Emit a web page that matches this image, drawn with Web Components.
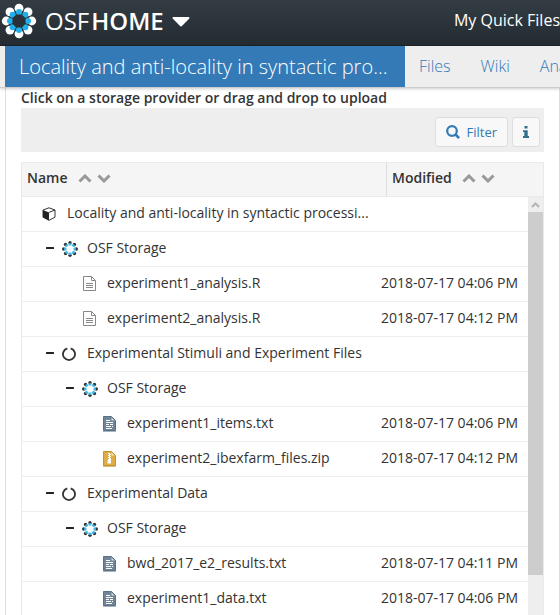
<!DOCTYPE html>
<html lang="en">
<head>
<meta charset="utf-8">
<title>OSF | Files</title>
<style>
  body { margin: 0; height: 100vh; overflow: hidden; background: #fff; color: #333; font: 14px/20px "Open Sans", "Noto Sans", sans-serif; }
</style>
</head>
<body>
<osf-page>
  <osf-navbar slot="top"><a href="#quickfiles">My Quick Files</a></osf-navbar>
  <project-nav slot="nav">
    <a slot="title" href="#project">Locality and anti-locality in syntactic pro...</a>
    <a href="#files">Files</a>
    <a href="#wiki">Wiki</a>
    <a href="#analytics">Analytics</a>
  </project-nav>
  <files-toolbar>Click on a storage provider or drag and drop to upload</files-toolbar>
  <files-grid></files-grid>
</osf-page>

<script>
const ring = (n, c, d, r, fill) => Array.from({ length: n }, (_, i) => {
  const a = i * 2 * Math.PI / n;
  return `<circle cx="${(c + d * Math.cos(a)).toFixed(2)}" cy="${(c + d * Math.sin(a)).toFixed(2)}" r="${r}" fill="${fill}"/>`;
}).join('');

const sheet = (fill, stroke, body) => `<path d="M1.5 1.5h8l4 4v10h-12z" fill="${fill}" stroke="${stroke}"/>${body}`;

const ICONS = {
  logo: [36, 36, ring(8, 18, 12.8, 4.4, '#fff') + ring(8, 18, 9, 3, '#1fb0ec')
    + '<circle cx="18" cy="18" r="6.6" fill="#293238"/>'],
  storage: [16, 16, ring(8, 8, 6.3, 1.7, '#343434') + ring(8, 8, 4.6, 1.5, '#3fb9ee')
    + '<circle cx="8" cy="8" r="3.4" fill="#fff"/>'],
  caret: [18, 10, '<path d="M1.5 0h15c1 0 1.300 1 .6 1.700L10.200 8.800a1.700 1.700 0 0 1-2.400 0L.9 1.700C.2 1 .5 0 1.500 0z" fill="#fff"/>'],
  up: [14, 9, '<path d="M1.500 7.500 7 2l5.500 5.500" fill="none" stroke="#999" stroke-width="3"/>'],
  down: [14, 9, '<path d="M1.500 1.500 7 7l5.500-5.500" fill="none" stroke="#999" stroke-width="3"/>'],
  scroll: [9, 6, '<path d="M1 5l3.500-3.500L8 5" fill="none" stroke="#b5b5b5" stroke-width="2"/>'],
  minus: [8, 4, '<rect y="1" width="8" height="2" rx=".5" fill="#222"/>'],
  search: [14, 14, '<circle cx="6" cy="6" r="4.800" fill="none" stroke="#337ab7" stroke-width="2.200"/><path d="M9.500 9.500l3.600 3.600" stroke="#337ab7" stroke-width="2.600"/>'],
  info: [6, 12, '<path d="M1.500 0h3v2.600h-3zM0 4.200h4.700v5.900H6V12H0v-1.900h1.300V6.100H0z" fill="#31708f"/>'],
  cube: [14, 14, '<path d="M7 .8 13 3v7.200L7 13.300 1 10.200V3z" fill="#fff" stroke="#333" stroke-linejoin="round"/><path d="M1 3l6 2.400v7.900l-6-3.100z" fill="#222"/><path d="M7 5.400 13 3" stroke="#333"/>'],
  circle: [14, 14, '<path d="M5.300 1.300a6 6 0 1 0 3.400 0" fill="none" stroke="#333" stroke-width="1.800"/>'],
  script: [15, 17, sheet('#fff', '#888', '<path d="M9.500 1.500v4h4M4 8.500h7M4 10.500h7M4 12.500h7" fill="none" stroke="#888"/>')],
  text: [15, 17, sheet('#708598', '#5a7083', '<path d="M9.500 2.500v3h3z" fill="#d5dee6"/><path d="M4 5.500h4M4 7.500h7M4 9.500h3M8 9.500h3M4 11.500h5M10 11.500h1M4 13.500h6" stroke="#fff"/><path d="M1 16.500h13" stroke="#aab5bf"/>')],
  zip: [15, 17, sheet('#dfac45', '#c5922d', '<path d="M9.500 2.500v3h3z" fill="#f8edce"/><path d="M6 3.500h2M7 4.500h2M6 5.500h2M7 6.500h2M6 7.500h2M7 8.500h2" stroke="#fff"/><path d="M6 9h3v4.500H5.500V11z" fill="#fff"/><path d="M1 16.500h13" stroke="#d9bd83"/>')],
};

class Base extends HTMLElement {
  connectedCallback() {
    if (!this.shadowRoot) this.attachShadow({ mode: 'open' }).innerHTML = this.render();
  }
}

customElements.define('osf-icon', class extends Base {
  render() {
    const [w, h, body] = ICONS[this.getAttribute('name')];
    return `<style>:host{display:inline-flex;flex:none}svg{display:block}</style>
      <svg width="${w}" height="${h}" viewBox="0 0 ${w} ${h}" aria-hidden="true">${body}</svg>`;
  }
});

customElements.define('osf-page', class extends Base {
  render() {
    return `<style>
      :host { display: flex; flex-direction: column; min-height: 100vh; }
      main { flex: 1; margin-left: 5px; padding: 0 15px; border: solid #ddd; border-width: 0 1px; }
    </style>
    <slot name="top"></slot><slot name="nav"></slot><main><slot></slot></main>`;
  }
});

customElements.define('osf-navbar', class extends Base {
  render() {
    return `<style>
      :host { display: flex; align-items: center; height: 45px; overflow: hidden; background: linear-gradient(#333c43, #242c32); border-bottom: 1px solid #1b2226; color: #fff; white-space: nowrap; }
      .brand { display: flex; align-items: center; flex: none; color: inherit; text-decoration: none; font-size: 24px; line-height: 32px; padding: 0 0 4px 1px; }
      .brand span { padding-left: 8px; }
      b { font-weight: 600; padding-left: 2px; }
      button { border: 0; background: none; padding: 0 8px 2px; display: flex; }
      nav { margin-left: auto; flex: 0 0 102px; font-size: 16px; padding-bottom: 6px; }
      ::slotted(a) { color: inherit; text-decoration: none; }
    </style>
    <a class="brand" href="#home"><osf-icon name="logo"></osf-icon><span>OSF<b>HOME</b></span></a>
    <button aria-label="Switch service"><osf-icon name="caret"></osf-icon></button>
    <nav><slot></slot></nav>`;
  }
});

customElements.define('project-nav', class extends Base {
  render() {
    return `<style>
      :host { position: relative; display: flex; align-items: center; height: 41px; padding-left: 5px; background: #eee; border-bottom: 1px solid #ccc; box-shadow: 0 1px 3px rgba(0,0,0,.2); }
      nav { flex: 1; min-width: 0; display: flex; gap: 30px; padding: 0 0 2px 14px; overflow: hidden; white-space: nowrap; font-size: 16px; font-weight: 300; }
      ::slotted(a) { color: #337ab7; text-decoration: none; }
      ::slotted([slot=title]) { box-sizing: border-box; flex: 0 0 400px; padding: 0 14px; background: #337ab7; color: #fff; font-size: 20px; line-height: 41px; font-weight: 300; white-space: nowrap; overflow: hidden; }
    </style>
    <slot name="title"></slot><nav><slot></slot></nav>`;
  }
});

customElements.define('files-toolbar', class extends Base {
  render() {
    return `<style>
      :host { display: block; margin-bottom: 10px; }
      p { margin: 0; font-weight: 600; }
      .bar { display: flex; justify-content: flex-end; gap: 4px; padding: 8px 4px 4px; background: #eee; }
      button { display: flex; align-items: center; gap: 6px; height: 30px; padding: 0 10px; margin: 1px 0; border: 1px solid #ddd; border-radius: 3px; background: #f8f8f8; color: #337ab7; font: 13px/20px "Open Sans", sans-serif; }
    </style>
    <p><slot></slot></p>
    <div class="bar">
      <button><osf-icon name="search"></osf-icon>Filter</button>
      <button aria-label="Information"><osf-icon name="info"></osf-icon></button>
    </div>`;
  }
});

customElements.define('sort-buttons', class extends Base {
  render() {
    return `<style>
      :host { display: inline-flex; gap: 5px; margin-left: 10px; }
      button { border: 0; padding: 0; background: none; display: flex; }
    </style>
    <button aria-label="Sort ascending"><osf-icon name="up"></osf-icon></button>
    <button aria-label="Sort descending"><osf-icon name="down"></osf-icon></button>`;
  }
});

customElements.define('tree-label', class extends Base {
  render() {
    const level = this.getAttribute('level');
    const toggle = this.hasAttribute('open') ? '<button aria-label="Collapse"><osf-icon name="minus"></osf-icon></button>' : '';
    return `<style>
      :host { display: flex; align-items: center; padding-left: calc(4px + 20px * ${level}); white-space: nowrap; }
      .toggle { flex: 0 0 16px; }
      .icon { flex: 0 0 25px; display: flex; padding-top: 1px; }
      button { border: 0; padding: 0; background: none; display: flex; }
    </style>
    <span class="toggle">${toggle}</span>
    <span class="icon"><osf-icon name="${this.getAttribute('icon')}"></osf-icon></span>
    <slot></slot>`;
  }
});

const ROWS = [
  [0, 'cube', 'Locality and anti-locality in syntactic processi...', '', false],
  [1, 'storage', 'OSF Storage', '', true],
  [2, 'script', 'experiment1_analysis.R', '2018-07-17 04:06 PM', false],
  [2, 'script', 'experiment2_analysis.R', '2018-07-17 04:12 PM', false],
  [1, 'circle', 'Experimental Stimuli and Experiment Files', '', true],
  [2, 'storage', 'OSF Storage', '', true],
  [3, 'text', 'experiment1_items.txt', '2018-07-17 04:06 PM', false],
  [3, 'zip', 'experiment2_ibexfarm_files.zip', '2018-07-17 04:12 PM', false],
  [1, 'circle', 'Experimental Data', '', true],
  [2, 'storage', 'OSF Storage', '', true],
  [3, 'text', 'bwd_2017_e2_results.txt', '2018-07-17 04:11 PM', false],
  [3, 'text', 'experiment1_data.txt', '2018-07-17 04:06 PM', false],
];

customElements.define('files-grid', class extends Base {
  render() {
    const bar = `<td class="scroll" rowspan="${ROWS.length}"><div class="up"><osf-icon name="scroll"></osf-icon></div><div class="thumb"></div></td>`;
    return `<style>
      :host { display: block; border: 1px solid #eaeaea; }
      table { width: 100%; table-layout: fixed; border-collapse: separate; border-spacing: 0; }
      .gap { width: 6px; } .date { width: 142px; } .bar { width: 15px; }
      th { box-sizing: border-box; height: 34px; padding: 0 5px 4px; background: #f5f5f5; border-bottom: 1px solid #eaeaea; text-align: left; font-weight: 600; }
      th + th { border-left: 1px solid #ddd; }
      td { box-sizing: border-box; height: 35px; padding: 0 0 2px; border-bottom: 1px solid #eee; }
      td.when { padding-right: 10px; text-align: right; white-space: nowrap; }
      td.scroll { padding: 0; border: 0; background: #eee; vertical-align: top; }
      .up { height: 15px; display: flex; align-items: center; justify-content: center; }
      .thumb { height: 363px; background: #cdcdcd; }
    </style>
    <table>
      <colgroup><col><col class="gap"><col class="date"><col class="bar"></colgroup>
      <thead><tr><th colspan="2">Name<sort-buttons></sort-buttons></th><th colspan="2">Modified<sort-buttons></sort-buttons></th></tr></thead>
      <tbody>${ROWS.map(([level, icon, name, date, open], i) => `<tr>
        <td><tree-label level="${level}" icon="${icon}"${open ? ' open' : ''}>${name}</tree-label></td>
        <td class="when" colspan="2">${date}</td>${i ? '' : bar}</tr>`).join('')}</tbody>
    </table>`;
  }
});
</script>
</body>
</html>
